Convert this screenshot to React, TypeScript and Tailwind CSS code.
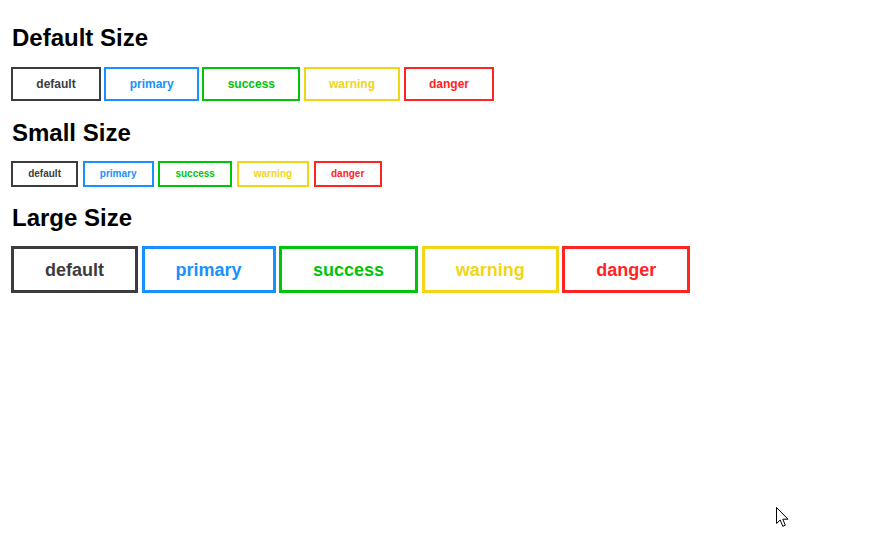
import React from "react";

type Kind = "default" | "primary" | "success" | "warning" | "danger";

const colors: Record<Kind, string> = {
  default: "border-[#3c3c3c] text-[#3c3c3c]",
  primary: "border-[#1890ff] text-[#1890ff]",
  success: "border-[#00c40a] text-[#00c40a]",
  warning: "border-[#f2d515] text-[#f2d515]",
  danger: "border-[#ff2424] text-[#ff2424]",
};

const kinds: Kind[] = ["default", "primary", "success", "warning", "danger"];

const sizes = {
  default: "h-[34px] px-[23.3px] text-[12px] border-2",
  small: "h-[26px] px-[15.2px] text-[10px] border-2",
  large: "h-[47px] px-[31px] text-[18px] border-[3px]",
};

function Row({ size, gap }: { size: keyof typeof sizes; gap: string }) {
  return (
    <div className={`flex items-start ${gap}`}>
      {kinds.map((k) => (
        <button
          key={k}
          className={`flex items-center justify-center bg-white font-bold leading-none ${sizes[size]} ${colors[k]}`}
        >
          {k}
        </button>
      ))}
    </div>
  );
}

export default function App() {
  return (
    <div
      className="relative h-[546px] w-[893px] overflow-hidden bg-white pl-[11px] pt-[24px]"
      style={{ fontFamily: '"Liberation Sans", Arial, sans-serif' }}
    >
      <h2 className="pl-px text-[24px] font-bold leading-[27px] text-black">Default Size</h2>
      <div className="mt-[16px]">
        <Row size="default" gap="gap-[3.4px]" />
      </div>
      <h2 className="mt-[18px] pl-px text-[24px] font-bold leading-[27px] text-black">Small Size</h2>
      <div className="mt-[15px]">
        <Row size="small" gap="gap-[4.5px]" />
      </div>
      <h2 className="mt-[17px] pl-px text-[24px] font-bold leading-[27px] text-black">Large Size</h2>
      <div className="mt-[15px]">
        <Row size="large" gap="gap-[3.5px]" />
      </div>
      <svg
        className="absolute left-[776px] top-[507px]"
        width="14"
        height="21"
        viewBox="0 0 14 21"
      >
        <path
          d="M0.5 0.5 L0.5 16.5 L4.2 13 L6.8 19.3 L9.3 18.2 L6.8 12.2 L12 12.2 Z"
          fill="white"
          stroke="black"
          strokeWidth="1"
          strokeLinejoin="miter"
        />
      </svg>
    </div>
  );
}
